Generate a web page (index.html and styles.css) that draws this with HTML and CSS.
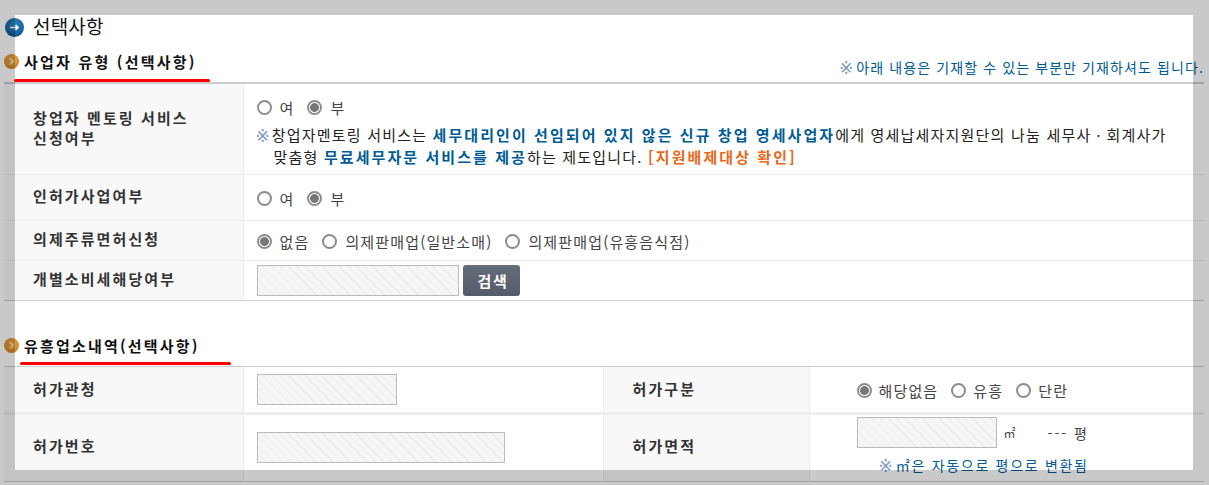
FILE: index.html
```html
<!DOCTYPE html>
<html lang="ko">
<head>
    <meta charset="UTF-8">
    <title>선택사항</title>
    <link rel="stylesheet" href="styles.css">
</head>
<body>
    <div class="page">
        <h2 class="page-title">
            <svg class="title-icon" width="19" height="19" viewBox="0 0 19 19">
                <defs>
                    <radialGradient id="blueBall" cx="50%" cy="35%" r="65%">
                        <stop offset="0" stop-color="#2f86c4"/>
                        <stop offset="1" stop-color="#0f5590"/>
                    </radialGradient>
                </defs>
                <circle cx="9.5" cy="9.5" r="9.5" fill="url(#blueBall)"/>
                <path d="M5 9.5h8M10.5 7l2.5 2.5-2.5 2.5" fill="none" stroke="#fff" stroke-width="1.5"/>
            </svg>
            선택사항
        </h2>

        <div class="section-head first">
            <svg class="head-icon" width="15" height="15" viewBox="0 0 15 15">
                <defs>
                    <radialGradient id="orangeBall" cx="50%" cy="35%" r="65%">
                        <stop offset="0" stop-color="#f0ac4c"/>
                        <stop offset="1" stop-color="#cf8223"/>
                    </radialGradient>
                </defs>
                <circle cx="7.5" cy="7.5" r="7.5" fill="url(#orangeBall)"/>
                <path d="M6 4.5l3 3-3 3" fill="none" stroke="#f3e3c8" stroke-width="1.6"/>
            </svg>
            <h3>사업자 유형 (선택사항)</h3>
            <p class="head-note"><span class="mark">※</span>아래 내용은 기재할 수 있는 부분만 기재하셔도 됩니다.</p>
            <span class="red-line line-one"></span>
        </div>

        <table class="form-table">
            <tr class="row-mentor">
                <th>창업자 멘토링 서비스<br>신청여부</th>
                <td>
                    <div class="radios radios-top">
                        <label><input type="radio" name="mentor"> 여</label>
                        <label><input type="radio" name="mentor" checked> 부</label>
                    </div>
                    <p class="notice"><span class="mark">※</span>창업자멘토링 서비스는 <b>세무대리인이 선임되어 있지 않은 신규 창업 영세사업자</b>에게 영세납세자지원단의 나눔 세무사ㆍ회계사가<br>
                    <span class="indent">맞춤형 <b>무료세무자문 서비스를 제공</b>하는 제도입니다. <a href="#">[지원배제대상 확인]</a></span></p>
                </td>
            </tr>
            <tr class="row-permit">
                <th>인허가사업여부</th>
                <td>
                    <div class="radios">
                        <label><input type="radio" name="permit"> 여</label>
                        <label><input type="radio" name="permit" checked> 부</label>
                    </div>
                </td>
            </tr>
            <tr class="row-liquor">
                <th>의제주류면허신청</th>
                <td>
                    <div class="radios">
                        <label><input type="radio" name="liquor" checked> 없음</label>
                        <label><input type="radio" name="liquor"> 의제판매업(일반소매)</label>
                        <label><input type="radio" name="liquor"> 의제판매업(유흥음식점)</label>
                    </div>
                </td>
            </tr>
            <tr class="row-tax">
                <th>개별소비세해당여부</th>
                <td class="search-cell">
                    <input class="hatch w-202" type="text" disabled>
                    <button class="search-btn" type="button">검색</button>
                </td>
            </tr>
        </table>

        <div class="section-head second">
            <svg class="head-icon" width="15" height="15" viewBox="0 0 15 15">
                <circle cx="7.5" cy="7.5" r="7.5" fill="url(#orangeBall)"/>
                <path d="M6 4.5l3 3-3 3" fill="none" stroke="#f3e3c8" stroke-width="1.6"/>
            </svg>
            <h3>유흥업소내역(선택사항)</h3>
            <span class="red-line line-two"></span>
        </div>

        <table class="form-table four-col">
            <tr class="row-office">
                <th>허가관청</th>
                <td><input class="hatch w-140" type="text" disabled></td>
                <th>허가구분</th>
                <td>
                    <div class="radios radios-tight">
                        <label><input type="radio" name="kind" checked> 해당없음</label>
                        <label><input type="radio" name="kind"> 유흥</label>
                        <label><input type="radio" name="kind"> 단란</label>
                    </div>
                </td>
            </tr>
            <tr class="row-number">
                <th>허가번호</th>
                <td><input class="hatch w-248" type="text" disabled></td>
                <th>허가면적</th>
                <td class="area-cell">
                    <div class="area-line">
                        <input class="hatch w-140" type="text" disabled>
                        <span class="unit">㎡</span>
                        <span class="pyeong">--- 평</span>
                    </div>
                    <p class="area-note"><span class="mark">※</span>㎡은 자동으로 평으로 변환됨</p>
                </td>
            </tr>
        </table>
    </div>

    <div class="dim-window"></div>
</body>
</html>
```

FILE: styles.css
```css
* {
    margin: 0;
    padding: 0;
    box-sizing: border-box;
}

html, body {
    height: 100%;
    overflow: hidden;
    background: #fff;
    font-family: "Noto Sans CJK KR", "Liberation Sans", sans-serif;
    font-size: 14px;
    color: #333;
}

.page {
    width: 1200px;
    margin-left: 4px;
    padding-top: 15px;
}

/* titles */
.page-title {
    display: flex;
    align-items: center;
    gap: 9px;
    height: 25px;
    padding-left: 1px;
    padding-bottom: 5px;
    font-size: 19px;
    font-weight: 400;
    letter-spacing: 0.2px;
    color: #111;
}

.title-icon {
    margin-top: 5px;
}

.section-head {
    position: relative;
    display: flex;
    align-items: center;
    gap: 5px;
    border-bottom: 2px solid #ccc;
}

.section-head.first {
    height: 44px;
}

.section-head.second {
    height: 66px;
    padding-top: 24px;
    border-bottom-width: 1px;
}

.section-head h3 {
    font-size: 15px;
    font-weight: 700;
    color: #111;
    letter-spacing: 2.2px;
    margin-bottom: -1px;
}

.head-note {
    margin-left: auto;
    margin-bottom: -12px;
    color: #005b94;
    font-size: 14px;
    letter-spacing: 1.1px;
    white-space: nowrap;
}

.mark {
    margin-right: 3px;
    color: #7e9ac0;
    font-family: "DejaVu Sans", sans-serif;
    font-size: 17px;
    letter-spacing: 0;
    line-height: 1;
    vertical-align: -1px;
}

.red-line {
    position: absolute;
    height: 3px;
    background: #f00;
    border-radius: 2px;
}

.line-one {
    left: 10px;
    width: 196px;
    bottom: 0;
}

.line-two {
    left: 16px;
    width: 211px;
    bottom: 1px;
}

/* tables */
.form-table {
    width: 100%;
    border-collapse: collapse;
    table-layout: fixed;
    border-bottom: 1px solid #ccc;
}

.form-table th {
    width: 239px;
    padding-left: 29px;
    padding-bottom: 2px;
    background: #f8f8f8;
    text-align: left;
    font-size: 15px;
    font-weight: 700;
    line-height: 20px;
    letter-spacing: 2.1px;
    color: #333;
    border-right: 1px solid #eee;
}

.form-table td {
    padding-left: 13px;
}

.form-table tr + tr th,
.form-table tr + tr td {
    border-top: 1px solid #eee;
}

.four-col th:nth-child(3) {
    width: 206px;
    border-left: 1px solid #eee;
}

.four-col td:nth-child(2) {
    width: 360px;
}

.four-col td:last-child {
    padding-left: 47px;
}

.row-mentor { height: 90px; }
.row-permit { height: 46px; }
.row-liquor { height: 40px; }
.row-tax { height: 40px; }
.row-office { height: 47px; }
.row-number { height: 68px; }

.row-mentor td {
    padding-top: 6px;
}

.row-office th {
    padding-bottom: 0;
}

.row-number th,
.row-number td {
    border-top-width: 3px !important;
}

.row-number th {
    padding-bottom: 4px;
}

.row-number td {
    padding-bottom: 2px;
}

/* radios */
.radios {
    display: flex;
    align-items: center;
    gap: 13px;
    margin-top: 2px;
    font-size: 15px;
    letter-spacing: 1.15px;
    color: #444;
}

.radios label {
    display: flex;
    align-items: center;
    gap: 8px;
}

.radios-tight label {
    gap: 7px;
}

.radios input {
    appearance: none;
    width: 15px;
    height: 15px;
    border: 2px solid #8c8c8c;
    border-radius: 50%;
    background: #fff;
}

.radios input:checked {
    background: radial-gradient(circle, #777 0, #777 4px, #fff 4.8px);
}

.notice {
    margin-top: 6px;
    font-size: 15px;
    letter-spacing: 1.2px;
    color: #222;
    line-height: 22px;
    white-space: nowrap;
}

.notice .mark {
    margin-left: -1px;
    margin-right: 2px;
}

.notice b {
    color: #005b94;
    letter-spacing: 2.07px;
}

.notice a {
    color: #e8691c;
    font-weight: 700;
    letter-spacing: 2.07px;
    text-decoration: none;
}

.indent {
    padding-left: 17px;
}

/* inputs */
.hatch {
    display: block;
    height: 31px;
    border: 1px solid #bbb;
    background: repeating-linear-gradient(45deg, #f6f6f6, #f6f6f6 5px, #ebebeb 5px, #ebebeb 6px);
}

.w-140 { width: 140px; }
.w-202 { width: 202px; }
.w-248 { width: 248px; }

.search-cell .hatch {
    display: inline-block;
    vertical-align: middle;
}

.search-btn {
    width: 57px;
    height: 31px;
    margin-left: 1px;
    padding-left: 2px;
    vertical-align: middle;
    border: 0;
    border-radius: 3px;
    background: linear-gradient(#666d7a, #555c69);
    color: #fff;
    font-family: inherit;
    font-size: 15px;
    font-weight: 700;
    letter-spacing: 1.5px;
}

.area-cell {
    vertical-align: top;
}

.area-line {
    display: flex;
    align-items: center;
    margin-top: 2px;
    color: #444;
    font-size: 12px;
}

.unit {
    margin-left: 7px;
}

.pyeong {
    margin-left: 32px;
    font-size: 14px;
    letter-spacing: 2px;
}

.area-note {
    margin-top: 7px;
    padding-left: 22px;
    color: #005b94;
    letter-spacing: 1.7px;
    white-space: nowrap;
}

/* dimmed screen around the capture window */
.dim-window {
    position: fixed;
    left: 15px;
    top: 15px;
    width: 1178px;
    height: 455px;
    box-shadow: 0 0 0 1500px rgba(0, 0, 0, 0.21);
}
```
